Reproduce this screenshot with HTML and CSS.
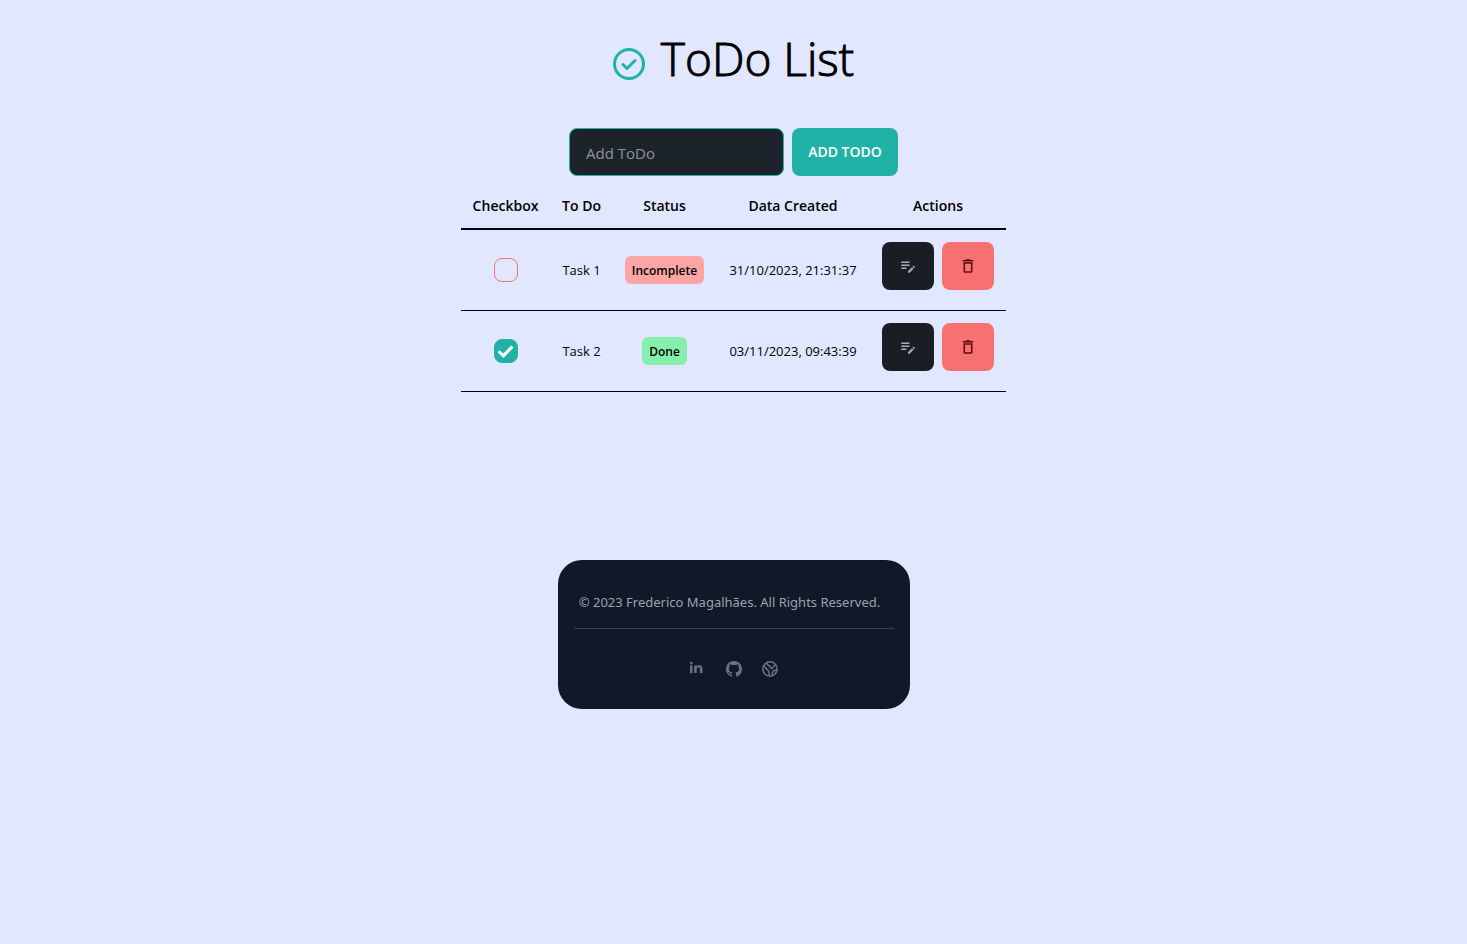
FILE: index.html
```html
<!DOCTYPE html>
<html lang="en">
<head>
<meta charset="utf-8">
<meta name="viewport" content="width=device-width, initial-scale=1">
<title>ToDo List</title>
<link rel="stylesheet" href="styles.css">
</head>
<body>
<svg class="sprite" aria-hidden="true">
  <symbol id="edit" viewBox="0 0 24 24"><path d="M3 10h11v2H3v-2zm0-2h11V6H3v2zm0 8h7v-2H3v2zm15.010-3.130.71-.71a.996.996 0 0 1 1.410 0l.71.71c.39.39.39 1.020 0 1.410l-.71.71-2.120-2.120zm-.71.71-5.300 5.300V21h2.120l5.300-5.300-2.120-2.120z"/></symbol>
  <symbol id="trash" viewBox="0 0 24 24"><path d="M16 9v10H8V9h8m-1.500-6h-5l-1 1H5v2h14V4h-3.500l-1-1zM18 7H6v12c0 1.100.9 2 2 2h8c1.100 0 2-.9 2-2V7z"/></symbol>
</svg>
<main class="page">
  <header class="title">
    <svg class="title-icon" viewBox="0 0 32 32" aria-hidden="true"><circle cx="16" cy="16" r="14.500"/><path d="M10 16.500l4 4 8-8"/></svg>
    <h1>ToDo List</h1>
  </header>
  <form class="add-form">
    <input class="add-input" type="text" placeholder="Add ToDo" aria-label="Add ToDo">
    <button class="btn btn-add" type="button">ADD TODO</button>
  </form>
  <table class="tasks">
    <colgroup><col class="c-check"><col class="c-todo"><col class="c-status"><col class="c-date"><col class="c-actions"></colgroup>
    <thead>
      <tr><th>Checkbox</th><th>To Do</th><th>Status</th><th>Data Created</th><th>Actions</th></tr>
    </thead>
    <tbody>
      <tr>
        <td><input class="check" type="checkbox" aria-label="Task 1"></td>
        <td>Task 1</td>
        <td><span class="badge badge-open">Incomplete</span></td>
        <td>31/10/2023, 21:31:37</td>
        <td><div class="actions">
          <button class="btn btn-edit" type="button" aria-label="Edit Task 1"><svg class="icon icon-action"><use href="#edit"/></svg></button>
          <button class="btn btn-delete" type="button" aria-label="Delete Task 1"><svg class="icon icon-action"><use href="#trash"/></svg></button>
        </div></td>
      </tr>
      <tr>
        <td><input class="check" type="checkbox" aria-label="Task 2" checked></td>
        <td>Task 2</td>
        <td><span class="badge badge-done">Done</span></td>
        <td>03/11/2023, 09:43:39</td>
        <td><div class="actions">
          <button class="btn btn-edit" type="button" aria-label="Edit Task 2"><svg class="icon icon-action"><use href="#edit"/></svg></button>
          <button class="btn btn-delete" type="button" aria-label="Delete Task 2"><svg class="icon icon-action"><use href="#trash"/></svg></button>
        </div></td>
      </tr>
    </tbody>
  </table>
  <footer class="footer">
    <p class="copyright">© 2023 Frederico Magalhães. All Rights Reserved.</p>
    <nav class="social">
      <a href="#" aria-label="LinkedIn"><svg class="icon" viewBox="0 0 16 16"><path d="M0 4.500h2.500V12H0zM1.250.7a1.400 1.400 0 1 1 0 2.800 1.400 1.400 0 0 1 0-2.800zM4.200 4.500h2.400v1c.5-.8 1.400-1.200 2.500-1.200 2.600 0 3.300 1.500 3.300 3.500V12H9.900V8.200c0-1-.1-1.900-1.500-1.900S6.700 7.200 6.700 8.200V12H4.200z"/></svg></a>
      <a href="#" aria-label="GitHub"><svg class="icon" viewBox="0 0 16 16"><path d="M8 0C3.580 0 0 3.580 0 8c0 3.540 2.290 6.530 5.470 7.590.4.070.55-.17.55-.38 0-.19-.01-.82-.01-1.490-2.010.37-2.530-.49-2.690-.94-.09-.23-.48-.94-.82-1.130-.28-.15-.68-.52-.01-.53.63-.01 1.080.58 1.230.82.72 1.210 1.870.87 2.330.66.070-.52.28-.87.51-1.070-1.780-.2-3.640-.89-3.640-3.950 0-.87.31-1.590.82-2.150-.08-.2-.36-1.020.08-2.120 0 0 .67-.21 2.200.82a7.600 7.600 0 0 1 4 0c1.530-1.040 2.200-.82 2.200-.82.44 1.100.16 1.920.08 2.120.51.56.82 1.270.82 2.150 0 3.070-1.870 3.750-3.650 3.950.29.25.54.73.54 1.480 0 1.070-.01 1.930-.01 2.200 0 .21.15.46.55.38A8.010 8.010 0 0 0 16 8c0-4.420-3.580-8-8-8z"/></svg></a>
      <a href="#" aria-label="Website"><svg class="icon icon-line" viewBox="0 0 16 16"><circle cx="8" cy="8" r="7.200"/><path d="M1.500 4.500 5 8.500c1.800 1 2.500 2.300 2 6.200M4.500 1.800c1 2.700 2.300 2.200 3.800 4.200.9 1.500 1.700 2 2.400.8.700-1.400 1.600-1.400 2.600-3.400M15 9c-3 .2-4 1-4.300 2.300-.2 1-.9 1-.7 3"/></svg></a>
    </nav>
  </footer>
</main>
</body>
</html>
```
FILE: styles.css
```css
* { box-sizing: border-box; }
body {
  margin: 0;
  min-height: 100vh;
  background: #e0e7ff;
  color: #000;
  font: 13px/20px "Segoe UI", "Open Sans", "Noto Sans", sans-serif;
}
.sprite { display: none; }
.page {
  display: flex;
  flex-direction: column;
  align-items: center;
  padding: 32px 16px;
}
.title {
  display: flex;
  align-items: center;
  gap: 16px;
  margin-bottom: 40px;
}
.title h1 {
  margin: 0;
  padding-bottom: 4px;
  font-size: 46px;
  line-height: 52px;
  font-weight: 300;
  -webkit-text-stroke: 1px #000;
}
.title-icon {
  width: 32px;
  height: 32px;
  margin-top: 8px;
  fill: none;
  stroke: #20b2a6;
  stroke-width: 3;
  stroke-linecap: round;
  stroke-linejoin: round;
}
.add-form { display: flex; gap: 8px; }
.btn {
  display: inline-flex;
  align-items: center;
  justify-content: center;
  height: 48px;
  padding: 0 16px;
  border: 1px solid transparent;
  border-radius: 8px;
  font: inherit;
  cursor: pointer;
}
.btn-add {
  width: 106px;
  padding: 0;
  background: #20b2a6;
  color: #fff;
  font-size: 14px;
  font-weight: 600;
}
.add-input {
  width: 215px;
  height: 48px;
  padding: 2px 16px 0;
  border: 1px solid #20b2a6;
  border-radius: 8px;
  background: #1d232a;
  color: #a6adbb;
  font: inherit;
  font-size: 15px;
}
.add-input::placeholder { color: #8d949f; opacity: 1; }
.tasks {
  width: 545px;
  max-width: 100%;
  table-layout: fixed;
  border-collapse: separate;
  border-spacing: 0;
  text-align: center;
  white-space: nowrap;
}
.c-check { width: 89px; }
.c-todo { width: 63px; }
.c-status { width: 103px; }
.c-date { width: 154px; }
.c-actions { width: 136px; }
.tasks th {
  padding: 20px 0 12px;
  border-bottom: 2px solid #000;
  font-size: 14px;
  font-weight: 600;
}
.tasks td { padding: 12px 0; border-bottom: 1px solid #000; }
.check {
  appearance: none;
  display: block;
  width: 24px;
  height: 24px;
  margin: 0 auto;
  border: 1px solid #f87171;
  border-radius: 8px;
}
.check:checked {
  border-color: #20b2a6;
  background: #20b2a6;
}
.check:checked::before {
  content: "";
  display: block;
  width: 16px;
  height: 13px;
  margin: 5px auto 0;
  background: #fff;
  clip-path: polygon(0 56%, 14% 40%, 37% 66%, 86% 4%, 100% 20%, 37% 100%);
}
.badge {
  display: inline-block;
  padding: 5px 7px 3px;
  border-radius: 6px;
  font-size: 12px;
  font-weight: 600;
}
.badge-open { background: #fca5a5; }
.badge-done { background: #86efac; }
.actions {
  display: flex;
  justify-content: center;
  gap: 8px;
  margin-bottom: 8px;
}
.icon { display: block; width: 16px; height: 16px; fill: currentColor; }
.icon-action { flex: none; width: 18px; height: 18px; }
.btn-edit, .btn-delete { width: 52px; }
.btn-edit { background: #191e24; color: #a6adbb; }
.btn-delete { background: #f87171; color: #5c0c0c; }
.footer {
  width: 352px;
  max-width: 100%;
  margin-top: 168px;
  padding: 32px 16px;
  border-radius: 24px;
  background: #111827;
}
.copyright {
  margin: 0;
  padding-bottom: 16px;
  padding-right: 8px;
  border-bottom: 1px solid #374151;
  color: #9ca3af;
  font-family: "Segoe UI", "Noto Sans", sans-serif;
  text-align: center;
  white-space: nowrap;
}
.social {
  display: flex;
  justify-content: center;
  gap: 20px;
  padding-top: 32px;
}
.social a { color: #6b7280; }
.icon-line { fill: none; stroke: currentColor; stroke-width: 1.5; stroke-linejoin: round; }
```
